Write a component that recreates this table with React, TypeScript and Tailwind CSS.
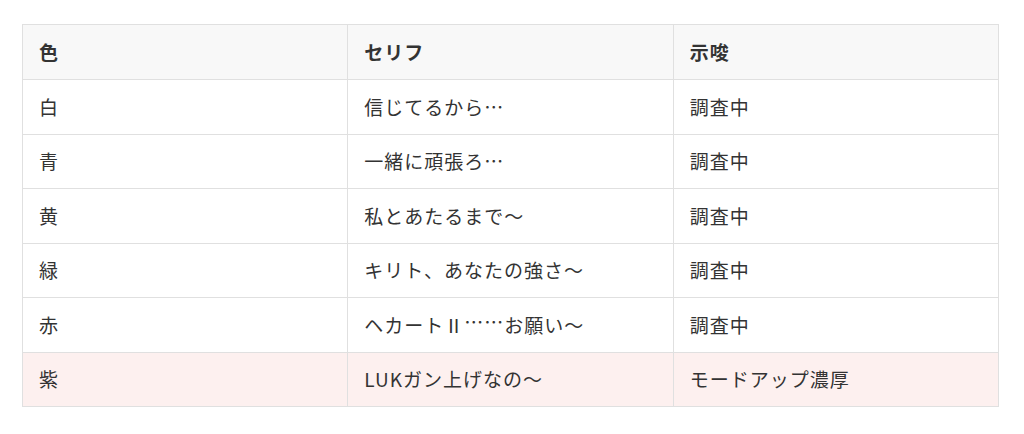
import type { ReactNode } from "react";

const rows: { color: string; line: ReactNode; hint: string; strong?: boolean }[] = [
  { color: "白", line: "信じてるから…", hint: "調査中" },
  { color: "青", line: "一緒に頑張ろ…", hint: "調査中" },
  { color: "黄", line: "私とあたるまで〜", hint: "調査中" },
  { color: "緑", line: "キリト、あなたの強さ〜", hint: "調査中" },
  {
    color: "赤",
    line: (
      <>
        ヘカートⅡ<span className="relative -top-[3px]">……</span>お願い〜
      </>
    ),
    hint: "調査中",
  },
  { color: "紫", line: "LUKガン上げなの〜", hint: "モードアップ濃厚", strong: true },
];

export default function App() {
  return (
    <div
      lang="ja"
      className="bg-white w-[1024px] h-[434px] pt-[24px] pl-[22px] text-[#333] text-[19px] tracking-[1px]"
      style={{ fontFamily: '"Noto Sans CJK JP", "Noto Sans", sans-serif' }}
    >
      <table className="w-[977px] border-collapse table-fixed">
        <thead>
          <tr className="h-[55px] bg-[#f8f8f8]">
            <th className="border border-[#e0e0e0] text-left font-bold pl-[16px]">色</th>
            <th className="border border-[#e0e0e0] text-left font-bold pl-[16px]">セリフ</th>
            <th className="border border-[#e0e0e0] text-left font-bold pl-[16px]">示唆</th>
          </tr>
        </thead>
        <tbody>
          {rows.map((r) => (
            <tr key={r.color} className={r.strong ? "h-[54.5px] bg-[#fdf0ef]" : "h-[54.5px] bg-white"}>
              <td className="border border-[#e0e0e0] pl-[16px]">{r.color}</td>
              <td className="border border-[#e0e0e0] pl-[16px]">{r.line}</td>
              <td className="border border-[#e0e0e0] pl-[16px]">{r.hint}</td>
            </tr>
          ))}
        </tbody>
      </table>
    </div>
  );
}
